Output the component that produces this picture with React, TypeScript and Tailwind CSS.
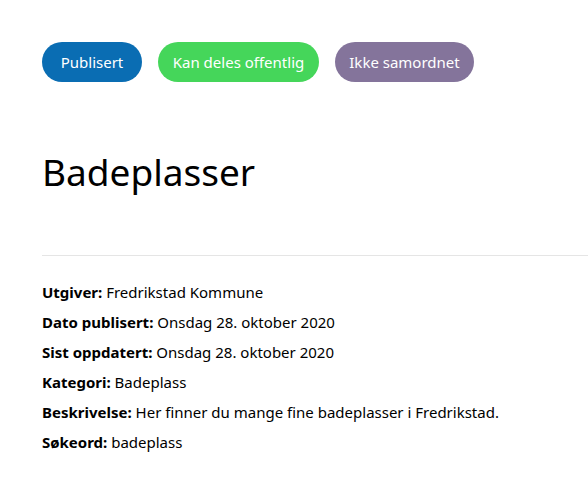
import React from 'react';

const tags = [
  { label: 'Publisert', className: 'bg-[#0a6db3] w-[100px]' },
  { label: 'Kan deles offentlig', className: 'bg-[#45d65a] w-[161px]' },
  { label: 'Ikke samordnet', className: 'bg-[#84749b] w-[139px]' },
];

const meta = [
  { key: 'Utgiver', value: 'Fredrikstad Kommune' },
  { key: 'Dato publisert', value: 'Onsdag 28. oktober 2020' },
  { key: 'Sist oppdatert', value: 'Onsdag 28. oktober 2020' },
  { key: 'Kategori', value: 'Badeplass' },
  { key: 'Beskrivelse', value: 'Her finner du mange fine badeplasser i Fredrikstad.' },
  { key: 'Søkeord', value: 'badeplass' },
];

export default function App() {
  return (
    <div className="min-h-[492px] bg-white pl-[42px] pt-[42px] text-black font-['Segoe_UI','Noto_Sans',sans-serif]">
      {/* Status tags */}
      <div className="flex gap-4">
        {tags.map((t) => (
          <span
            key={t.label}
            className={`flex h-10 items-center justify-center rounded-full text-[15px] text-white ${t.className}`}
          >
            {t.label}
          </span>
        ))}
      </div>

      <h1 className="mt-[66px] text-[37px] leading-[48px] font-normal">Badeplasser</h1>

      <hr className="mt-[59px] border-t border-[#e5e5e5]" />

      {/* Metadata */}
      <dl className="mt-[21px] text-[15px]">
        {meta.map((m) => (
          <div key={m.key} className="h-[30px] leading-[30px]">
            <dt className="inline font-bold">{m.key}:</dt> <dd className="inline">{m.value}</dd>
          </div>
        ))}
      </dl>
    </div>
  );
}
